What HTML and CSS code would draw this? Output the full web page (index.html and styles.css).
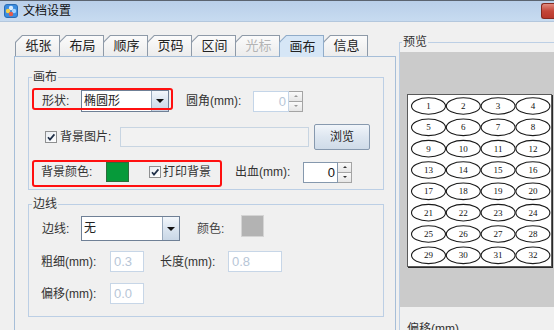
FILE: index.html
```html
<!DOCTYPE html>
<html>
<head>
<meta charset="utf-8">
<link rel="stylesheet" href="styles.css">
</head>
<body>
<div class="window">
  <div class="titlebar">
    <svg class="app-icon" width="14" height="14" viewBox="0 0 14 14">
      <rect x="0.5" y="0.5" width="13" height="13" rx="2.5" fill="#3b8de0" stroke="#2a6db5"/>
      <circle cx="7" cy="4" r="2.2" fill="#d6ebff"/>
      <circle cx="4" cy="7" r="2.2" fill="#f4cf4a"/>
      <circle cx="10" cy="7" r="2.2" fill="#a4d4ff"/>
      <circle cx="7" cy="10" r="2.2" fill="#e35d4c"/>
    </svg>
    <span class="title">文档设置</span>
    <div class="close"></div>
  </div>

  <div class="content">
    <div class="left">
      <div class="tabs">
        <div class="tab"><div class="tab-face">纸张</div></div>
        <div class="tab"><div class="tab-face">布局</div></div>
        <div class="tab"><div class="tab-face">顺序</div></div>
        <div class="tab"><div class="tab-face">页码</div></div>
        <div class="tab"><div class="tab-face">区间</div></div>
        <div class="tab disabled"><div class="tab-face">光标</div></div>
        <div class="tab selected"><div class="tab-face">画布</div></div>
        <div class="tab"><div class="tab-face">信息</div></div>
      </div>

      <div class="panel">
        <div class="group canvas-group">
          <div class="gtitle">画布</div>

          <div class="row shape-row">
            <span class="lbl shape-lbl">形状:</span>
            <div class="combo shape-combo">
              <span class="combo-text">椭圆形</span>
              <span class="combo-btn"><i class="tri"></i></span>
            </div>
            <span class="lbl corner-lbl">圆角(mm):</span>
            <div class="spin spin-off">
              <span class="spin-field">0</span>
              <span class="spin-btns"><i class="sb sb-up"><b></b></i><i class="sb sb-down"><b></b></i></span>
            </div>
          </div>

          <div class="row image-row">
            <span class="check image-check">
              <svg width="12" height="12" viewBox="0 0 12 12"><path d="M3 6.2 L5 8.6 L9.4 3.4" fill="none" stroke="#1f2f48" stroke-width="1.7"/></svg>
            </span>
            <span class="lbl image-lbl">背景图片:</span>
            <span class="field field-off image-field"></span>
            <span class="btn browse-btn">浏览</span>
          </div>

          <div class="row color-row">
            <span class="lbl color-lbl">背景颜色:</span>
            <span class="swatch green"></span>
            <span class="check print-check">
              <svg width="12" height="12" viewBox="0 0 12 12"><path d="M3 6.2 L5 8.6 L9.4 3.4" fill="none" stroke="#1f2f48" stroke-width="1.7"/></svg>
            </span>
            <span class="lbl print-lbl">打印背景</span>
            <span class="lbl bleed-lbl">出血(mm):</span>
            <div class="spin spin-on">
              <span class="spin-field">0</span>
              <span class="spin-btns"><i class="sb sb-up"><b></b></i><i class="sb sb-down"><b></b></i></span>
            </div>
          </div>
        </div>

        <div class="group border-group">
          <div class="gtitle">边线</div>

          <div class="row line-row">
            <span class="lbl line-lbl">边线:</span>
            <div class="combo line-combo">
              <span class="combo-text">无</span>
              <span class="combo-btn"><i class="tri"></i></span>
            </div>
            <span class="lbl lcolor-lbl">颜色:</span>
            <span class="swatch gray"></span>
          </div>

          <div class="row width-row">
            <span class="lbl mm-lbl">粗细(mm):</span>
            <span class="field field-off small-field">0.3</span>
            <span class="lbl len-lbl">长度(mm):</span>
            <span class="field field-off len-field">0.8</span>
          </div>

          <div class="row offset-row">
            <span class="lbl mm-lbl">偏移(mm):</span>
            <span class="field field-off small-field">0.0</span>
          </div>
        </div>
      </div>
    </div>

    <div class="right">
      <div class="pgroup">
        <div class="gtitle ptitle">预览</div>
        <div class="pview">
          <div class="sheet">
            <svg width="143" height="171" viewBox="0 0 143 171">
              <g fill="#fff" stroke="#1a1a1a" stroke-width="1.1">
                <ellipse cx="20.5" cy="11" rx="17" ry="8.3"/><ellipse cx="55.3" cy="11" rx="17" ry="8.3"/><ellipse cx="90.1" cy="11" rx="17" ry="8.3"/><ellipse cx="124.9" cy="11" rx="17" ry="8.3"/>
                <ellipse cx="20.5" cy="32.3" rx="17" ry="8.3"/><ellipse cx="55.3" cy="32.3" rx="17" ry="8.3"/><ellipse cx="90.1" cy="32.3" rx="17" ry="8.3"/><ellipse cx="124.9" cy="32.3" rx="17" ry="8.3"/>
                <ellipse cx="20.5" cy="53.7" rx="17" ry="8.3"/><ellipse cx="55.3" cy="53.7" rx="17" ry="8.3"/><ellipse cx="90.1" cy="53.7" rx="17" ry="8.3"/><ellipse cx="124.9" cy="53.7" rx="17" ry="8.3"/>
                <ellipse cx="20.5" cy="75" rx="17" ry="8.3"/><ellipse cx="55.3" cy="75" rx="17" ry="8.3"/><ellipse cx="90.1" cy="75" rx="17" ry="8.3"/><ellipse cx="124.9" cy="75" rx="17" ry="8.3"/>
                <ellipse cx="20.5" cy="96.3" rx="17" ry="8.3"/><ellipse cx="55.3" cy="96.3" rx="17" ry="8.3"/><ellipse cx="90.1" cy="96.3" rx="17" ry="8.3"/><ellipse cx="124.9" cy="96.3" rx="17" ry="8.3"/>
                <ellipse cx="20.5" cy="117.7" rx="17" ry="8.3"/><ellipse cx="55.3" cy="117.7" rx="17" ry="8.3"/><ellipse cx="90.1" cy="117.7" rx="17" ry="8.3"/><ellipse cx="124.9" cy="117.7" rx="17" ry="8.3"/>
                <ellipse cx="20.5" cy="139" rx="17" ry="8.3"/><ellipse cx="55.3" cy="139" rx="17" ry="8.3"/><ellipse cx="90.1" cy="139" rx="17" ry="8.3"/><ellipse cx="124.9" cy="139" rx="17" ry="8.3"/>
                <ellipse cx="20.5" cy="160.3" rx="17" ry="8.3"/><ellipse cx="55.3" cy="160.3" rx="17" ry="8.3"/><ellipse cx="90.1" cy="160.3" rx="17" ry="8.3"/><ellipse cx="124.9" cy="160.3" rx="17" ry="8.3"/>
              </g>
              <g class="nums" text-anchor="middle">
                <text x="20.5" y="14">1</text><text x="55.3" y="14">2</text><text x="90.1" y="14">3</text><text x="124.9" y="14">4</text>
                <text x="20.5" y="35.3">5</text><text x="55.3" y="35.3">6</text><text x="90.1" y="35.3">7</text><text x="124.9" y="35.3">8</text>
                <text x="20.5" y="56.7">9</text><text x="55.3" y="56.7">10</text><text x="90.1" y="56.7">11</text><text x="124.9" y="56.7">12</text>
                <text x="20.5" y="78">13</text><text x="55.3" y="78">14</text><text x="90.1" y="78">15</text><text x="124.9" y="78">16</text>
                <text x="20.5" y="99.3">17</text><text x="55.3" y="99.3">18</text><text x="90.1" y="99.3">19</text><text x="124.9" y="99.3">20</text>
                <text x="20.5" y="120.7">21</text><text x="55.3" y="120.7">22</text><text x="90.1" y="120.7">23</text><text x="124.9" y="120.7">24</text>
                <text x="20.5" y="142">25</text><text x="55.3" y="142">26</text><text x="90.1" y="142">27</text><text x="124.9" y="142">28</text>
                <text x="20.5" y="163.3">29</text><text x="55.3" y="163.3">30</text><text x="90.1" y="163.3">31</text><text x="124.9" y="163.3">32</text>
              </g>
            </svg>
          </div>
        </div>
        <div class="plabel">偏移(mm)</div>
      </div>
    </div>
  </div>

  <div class="annot annot-shape"></div>
  <div class="annot annot-color"></div>
</div>
</body>
</html>
```

FILE: styles.css
```css
html, body {
  margin: 0;
  padding: 0;
}
body {
  width: 554px;
  height: 330px;
  overflow: hidden;
  background: #f0f0f0;
  font-family: "Liberation Sans", "Noto Sans CJK SC", sans-serif;
  font-size: 12px;
  color: #333;
}
.window {
  position: relative;
  width: 554px;
  height: 330px;
  overflow: hidden;
}

/* title bar */
.titlebar {
  height: 20px;
  border-top: 1px solid #5b6470;
  border-bottom: 1px solid #b3c7dd;
  background: linear-gradient(#b9cfe9, #c7dbf0);
  display: flex;
  align-items: center;
}
.app-icon {
  margin-left: 4px;
  flex: none;
}
.title {
  margin-left: 5px;
  font-size: 12px;
  color: #111;
  line-height: 16px;
}
.close {
  margin-left: auto;
  width: 12px;
  height: 14px;
  border: 1px solid #862a20;
  border-right: none;
  border-radius: 3px 0 0 3px;
  background: linear-gradient(#e08a7e, #c4473a 50%, #b8372b);
}

/* layout */
.content {
  display: flex;
  align-items: flex-start;
}
.left {
  margin-left: 14px;
  width: 382px;
  flex: none;
}

/* tabs */
.tabs {
  margin-top: 13px;
  padding-left: 1px;
  height: 21px;
  display: flex;
  align-items: flex-end;
}
.tab {
  width: 45px;
  height: 21px;
  margin-right: -1px;
  box-sizing: border-box;
  padding: 1px 1px 0 1px;
  background: #8e9aa8;
  clip-path: polygon(0 7px, 7px 0, 100% 0, 100% 100%, 0 100%);
  font-size: 13px;
}
.tab-face {
  height: 100%;
  background: linear-gradient(#fbfbfb, #ececec);
  clip-path: polygon(0 6.5px, 6.5px 0, 100% 0, 100% 100%, 0 100%);
  display: flex;
  align-items: center;
  justify-content: center;
  padding-left: 2px;
  box-sizing: border-box;
  color: #222;
  line-height: 16px;
}
.tab.disabled .tab-face {
  color: #b4b4b4;
}
.tab.selected {
  height: 22px;
  margin-bottom: -1px;
  position: relative;
  z-index: 1;
  background: #90acc9;
}
.tab.selected .tab-face {
  background: #d6e6f6;
}

/* panel */
.panel {
  height: 300px;
  border: 1px solid #a6bed8;
  border-bottom: none;
  padding: 0 0 0 13px;
}
.group {
  width: 356px;
  box-sizing: border-box;
  border: 1px solid #bccfe5;
}
.canvas-group {
  margin-top: 20px;
  padding-bottom: 6px;
}
.border-group {
  margin-top: 14px;
  padding-bottom: 12px;
}
.gtitle {
  margin: -9px 0 0 3px;
  padding: 0 1px;
  width: max-content;
  background: #f0f0f0;
  line-height: 16px;
  font-size: 12px;
  color: #333;
}

/* rows */
.row {
  display: flex;
  align-items: center;
}
.lbl {
  flex: none;
  line-height: 16px;
  white-space: nowrap;
}
.shape-row { height: 22px; margin-top: 5px; }
.image-row { height: 26px; margin-top: 12px; }
.color-row { height: 22px; margin-top: 11px; }
.line-row { height: 25px; margin-top: 4px; }
.width-row { height: 21px; margin-top: 10px; }
.offset-row { height: 21px; margin-top: 11px; }

.shape-lbl { margin-left: 13px; width: 39px; }
.corner-lbl { margin-left: 17px; width: 67px; }
.image-check { margin-left: 16px; }
.image-lbl { margin-left: 3px; width: 60px; }
.color-lbl { margin-left: 12px; width: 65px; }
.print-check { margin-left: 20px; }
.print-lbl { margin-left: 2px; width: 72px; }
.bleed-lbl { width: 68px; }
.line-lbl { margin-left: 13px; width: 39px; }
.lcolor-lbl { margin-left: 17px; width: 44px; color: #444; }
.mm-lbl { margin-left: 12px; width: 69px; }
.len-lbl { margin-left: 16px; width: 68px; }

/* combo */
.combo {
  flex: none;
  display: flex;
  box-sizing: border-box;
  background: #fff;
  border: 1px solid #6f8096;
}
.shape-combo {
  width: 88px;
  height: 22px;
}
.line-combo {
  width: 99px;
  height: 25px;
}
.combo-text {
  flex: 1;
  padding-left: 2px;
  line-height: 20px;
  color: #222;
}
.line-combo .combo-text {
  line-height: 23px;
}
.combo-btn {
  width: 16px;
  border-left: 1px solid #98a9bc;
  background: linear-gradient(#f3f7fb, #dbe5f0 50%, #c9d7e6);
  display: flex;
  align-items: center;
  justify-content: center;
}
.tri {
  width: 0;
  height: 0;
  border-left: 4px solid transparent;
  border-right: 4px solid transparent;
  border-top: 4px solid #111;
}

/* spinner */
.spin {
  flex: none;
  display: flex;
  height: 21px;
}
.spin-off { width: 50px; }
.spin-on { width: 49px; }
.spin-field {
  flex: 1;
  box-sizing: border-box;
  background: #fff;
  text-align: right;
  padding-right: 2px;
  line-height: 19px;
  font-size: 13px;
}
.spin-off .spin-field {
  border: 1px solid #c4d5e8;
  color: #b7c6d7;
}
.spin-on .spin-field {
  border: 1px solid #8598ad;
  color: #111;
}
.spin-btns {
  width: 14px;
  display: flex;
  flex-direction: column;
  border: 1px solid #a4a4a4;
  border-left: none;
  box-sizing: border-box;
}
.sb {
  flex: 1;
  background: linear-gradient(#fafafa, #e6e6e6);
  display: flex;
  align-items: center;
  justify-content: center;
}
.sb-up {
  border-bottom: 1px solid #a4a4a4;
}
.sb b {
  width: 0;
  height: 0;
  border-left: 2px solid transparent;
  border-right: 2px solid transparent;
}
.sb-up b { border-bottom: 2px solid #999; }
.sb-down b { border-top: 2px solid #999; }
.spin-on .sb-up b { border-bottom-color: #333; }
.spin-on .sb-down b { border-top-color: #333; }

/* checkbox */
.check {
  flex: none;
  width: 12px;
  height: 12px;
  box-sizing: border-box;
  border: 1px solid #8e8f90;
  background: linear-gradient(135deg, #e9edf2, #fff);
  display: flex;
  align-items: center;
  justify-content: center;
}
.check svg {
  flex: none;
}

/* fields */
.field {
  flex: none;
  box-sizing: border-box;
  height: 21px;
  line-height: 19px;
  padding-left: 3px;
  font-size: 13px;
}
.field-off {
  border: 1px solid #c7d6e7;
  background: #fff;
  color: #b7c6d7;
}
.image-field {
  width: 189px;
  height: 20px;
  background: #f2f2f2;
  border-color: #c8d5e2;
}
.small-field { width: 34px; }
.len-field { width: 54px; }

/* button */
.btn {
  flex: none;
  box-sizing: border-box;
  border: 1px solid #8799ae;
  border-radius: 2px;
  background: linear-gradient(#f1f5fa, #dde6f0 50%, #cfdbe8);
  text-align: center;
  color: #222;
}
.browse-btn {
  margin-left: 5px;
  width: 56px;
  height: 26px;
  line-height: 24px;
}

/* swatches */
.swatch {
  flex: none;
  box-sizing: border-box;
}
.swatch.green {
  width: 23px;
  height: 20px;
  background: #069a3a;
  border: 1px solid #2c6e3c;
}
.swatch.gray {
  width: 23px;
  height: 22px;
  align-self: flex-start;
  margin-top: -1px;
  background: #b3b3b3;
  border: 1px solid #d4d4d4;
}

/* preview */
.right {
  margin-left: 3px;
  margin-top: 20px;
  flex: none;
}
.pgroup {
  width: 200px;
  border-top: 1px solid #bccfe5;
  border-left: 1px solid #bccfe5;
}
.ptitle {
  margin-left: 2px;
}
.pview {
  margin-top: 2px;
  height: 255px;
  box-sizing: border-box;
  background: #cbcbcb;
  padding: 42px 0 0 7px;
}
.sheet {
  width: 143px;
  height: 171px;
  border: 1px solid #5a5a5a;
  background: #fff;
  box-shadow: 1px 1px 0 #2a2a2a;
}
.sheet svg {
  display: block;
}
.nums text {
  font-family: "Liberation Serif", serif;
  font-size: 9px;
  fill: #111;
}
.plabel {
  margin: 14px 0 0 7px;
  line-height: 16px;
  color: #333;
}

/* red annotation boxes drawn over the dialog */
.annot {
  position: absolute;
  box-sizing: border-box;
  border: 2px solid #ff1010;
  border-radius: 3px;
}
.annot-shape {
  left: 32px;
  top: 88px;
  width: 141px;
  height: 22px;
}
.annot-color {
  left: 32px;
  top: 160px;
  width: 190px;
  height: 27px;
}
```
